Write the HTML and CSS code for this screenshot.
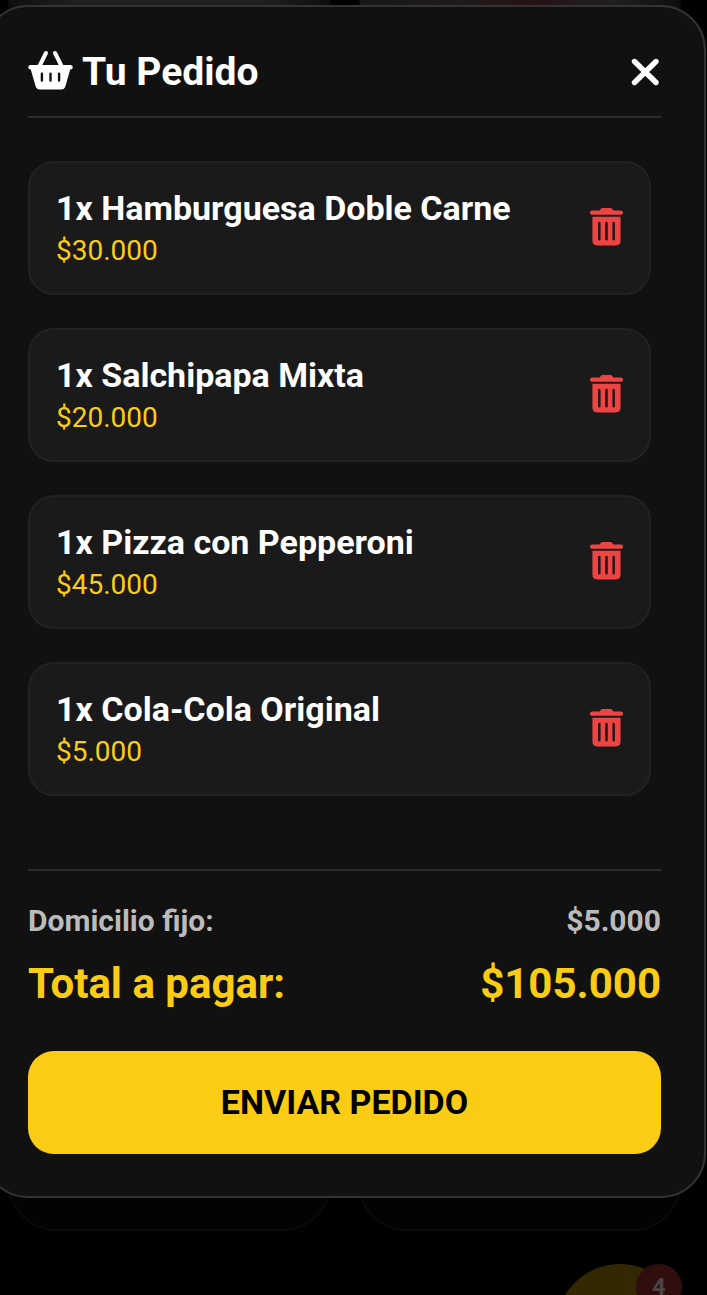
FILE: index.html
```html
<!DOCTYPE html>
<html lang="es">
<head>
<meta charset="utf-8">
<meta name="viewport" content="width=device-width, initial-scale=1">
<title>Tu Pedido</title>
<link rel="stylesheet" href="styles.css">
</head>
<body>
<svg class="sprite" aria-hidden="true">
  <symbol id="trash" viewBox="0 0 34 40">
    <path fill="currentColor" d="M10.500 2.200Q11 .5 13 .5H21Q23 .5 23.500 2.200L24 3H31.800A2.200 2.200 0 0 1 31.800 7.500H2.200A2.200 2.200 0 0 1 2.200 3H10Z"/>
    <path fill="currentColor" fill-rule="evenodd" d="M2.500 9.500H31.500V34Q31.500 39 26.500 39H7.500Q2.500 39 2.500 34ZM9.600 14.500A1.300 1.300 0 0 0 8.300 15.800V32.700A1.300 1.300 0 0 0 10.900 32.700V15.800A1.300 1.300 0 0 0 9.600 14.500ZM17 14.500A1.300 1.300 0 0 0 15.700 15.800V32.700A1.300 1.300 0 0 0 18.300 32.700V15.800A1.300 1.300 0 0 0 17 14.500ZM24.400 14.500A1.300 1.300 0 0 0 23.100 15.800V32.700A1.300 1.300 0 0 0 25.700 32.700V15.800A1.300 1.300 0 0 0 24.400 14.500Z"/>
  </symbol>
</svg>

<div class="menu" aria-hidden="true">
  <div class="product"></div>
  <div class="product product-warm"></div>
</div>
<div class="cart-fab" aria-hidden="true"><span class="cart-count">4</span></div>

<div class="overlay">
  <main class="modal" role="dialog" aria-labelledby="order-title">
    <header class="modal-header">
      <h1 class="modal-title" id="order-title">
        <svg class="basket" viewBox="0 0 45 40" aria-hidden="true">
          <path fill="none" stroke="currentColor" stroke-width="4" stroke-linecap="round" d="M18 3L11.500 16M27 3L33.500 16"/>
          <path fill="currentColor" fill-rule="evenodd" d="M2.300 15H42.700A2.300 2.300 0 0 1 42.200 19.600L37.500 36Q36.500 39.500 33 39.500H12Q8.500 39.500 7.500 36L2.800 19.600A2.300 2.300 0 0 1 2.300 15ZM13.900 22.500A1.200 1.200 0 0 0 12.700 23.700V30.600A1.200 1.200 0 0 0 15.100 30.600V23.700A1.200 1.200 0 0 0 13.900 22.500ZM22.500 22.500A1.200 1.200 0 0 0 21.300 23.700V30.600A1.200 1.200 0 0 0 23.700 30.600V23.700A1.200 1.200 0 0 0 22.500 22.500ZM31.100 22.500A1.200 1.200 0 0 0 29.900 23.700V30.600A1.200 1.200 0 0 0 32.300 30.600V23.700A1.200 1.200 0 0 0 31.100 22.500Z"/>
        </svg>
        Tu Pedido
      </h1>
      <button class="close" type="button" aria-label="Cerrar">
        <svg class="close-icon" viewBox="0 0 32 32" aria-hidden="true"><path fill="none" stroke="currentColor" stroke-width="5.400" stroke-linecap="round" d="M5.500 5.500L27 26.500M27 5.500L5.500 26.500"/></svg>
      </button>
    </header>

    <ul class="items">
      <li class="item">
        <div><h2 class="item-name">1x Hamburguesa Doble Carne</h2><p class="item-price">$30.000</p></div>
        <button class="remove" type="button" aria-label="Eliminar Hamburguesa Doble Carne"><svg class="trash-icon"><use href="#trash"/></svg></button>
      </li>
      <li class="item">
        <div><h2 class="item-name">1x Salchipapa Mixta</h2><p class="item-price">$20.000</p></div>
        <button class="remove" type="button" aria-label="Eliminar Salchipapa Mixta"><svg class="trash-icon"><use href="#trash"/></svg></button>
      </li>
      <li class="item">
        <div><h2 class="item-name">1x Pizza con Pepperoni</h2><p class="item-price">$45.000</p></div>
        <button class="remove" type="button" aria-label="Eliminar Pizza con Pepperoni"><svg class="trash-icon"><use href="#trash"/></svg></button>
      </li>
      <li class="item">
        <div><h2 class="item-name">1x Cola-Cola Original</h2><p class="item-price">$5.000</p></div>
        <button class="remove" type="button" aria-label="Eliminar Cola-Cola Original"><svg class="trash-icon"><use href="#trash"/></svg></button>
      </li>
    </ul>

    <footer class="summary">
      <p class="row delivery"><span>Domicilio fijo:</span><span>$5.000</span></p>
      <p class="row total"><span>Total a pagar:</span><span>$105.000</span></p>
      <button class="send" type="button">ENVIAR PEDIDO</button>
    </footer>
  </main>
</div>
</body>
</html>
```
FILE: styles.css
```css
* { box-sizing: border-box; margin: 0; padding: 0; }

body {
  position: relative;
  height: 100vh;
  overflow: hidden;
  background: #000;
  color: #fff;
  font-family: Roboto, "Liberation Sans", sans-serif;
}

button { border: 0; background: none; color: inherit; font: inherit; cursor: pointer; }
svg { display: block; }
.sprite { position: absolute; width: 0; height: 0; }

/* Dimmed menu behind the dialog */
.menu {
  position: absolute;
  inset: 0 26px 64px 8px;
  display: grid;
  grid-template-columns: 1fr 1fr;
  gap: 27px;
}
.product {
  border: 2px solid #0a0a0a;
  border-top: 0;
  border-radius: 0 0 48px 48px;
  background: linear-gradient(90deg, #0e0e0e, #202020 20%, #202020 80%, #0e0e0e) top / 100% 48px no-repeat, #030303;
}
.product-warm {
  background: linear-gradient(90deg, #181818, #201a1a 30%, #241416 55%, #202020 80%, #0e0e0e) top / 100% 48px no-repeat, #030303;
}
.cart-fab {
  position: absolute;
  right: 23px;
  bottom: -97px;
  width: 128px;
  height: 128px;
  border-radius: 50%;
  background: #322903;
}
.cart-count {
  position: absolute;
  top: 0;
  right: 2px;
  width: 46px;
  height: 46px;
  border-radius: 50%;
  background: #300e0e;
  color: #4a4444;
  font-size: 24px;
  font-weight: 700;
  line-height: 46px;
  text-align: center;
}

.overlay { position: relative; padding-top: 5px; }
.modal {
  margin: 0 1px 0 -17px;
  padding: 38px 43px 42px;
  border: 2px solid #333;
  border-radius: 45px;
  background: #111;
}

.modal-header {
  display: flex;
  align-items: center;
  justify-content: space-between;
  padding-bottom: 17px;
  border-bottom: 2px solid #2c2c2c;
}
.modal-title {
  display: flex;
  align-items: center;
  gap: 9px;
  font-size: 39px;
  line-height: 54px;
}
.basket { width: 45px; height: 40px; margin-bottom: 4px; }
.close-icon { width: 32px; height: 32px; }

.items {
  display: grid;
  gap: 33px;
  padding: 43px 10px 73px 0;
  list-style: none;
}
.item {
  display: flex;
  align-items: center;
  justify-content: space-between;
  padding: 24px 26px 23px;
  border: 2px solid #222;
  border-radius: 26px;
  background: #1a1a1a;
}
.item-name { font-size: 34px; line-height: 42px; }
.item-price { margin-top: 3px; color: #facc15; font-size: 28px; line-height: 38px; }
.remove { padding-bottom: 4px; color: #ef4444; }
.trash-icon { width: 33px; height: 40px; }

.summary { padding-top: 29px; border-top: 2px solid #2c2c2c; }
.row { display: flex; justify-content: space-between; font-weight: 700; }
.delivery { color: #bbb; font-size: 30px; line-height: 42px; }
.total { padding-top: 14px; color: #facc15; font-size: 42px; line-height: 56px; }
.send {
  width: 100%;
  margin-top: 39px;
  padding: 31px 32px 32px;
  border-radius: 26px;
  background: #facc15;
  color: #000;
  font-size: 34px;
  font-weight: 700;
  line-height: 40px;
}
```
